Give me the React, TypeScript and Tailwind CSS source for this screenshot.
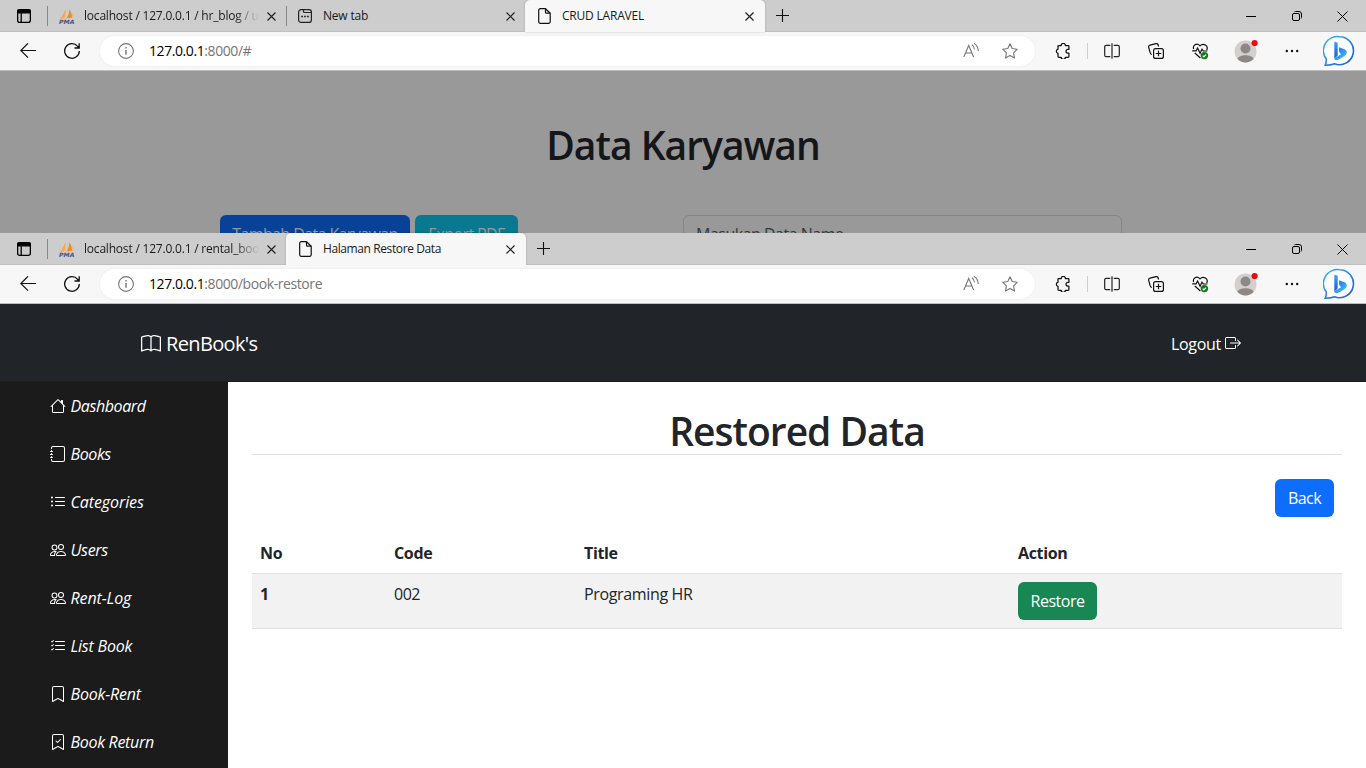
import React from "react";
import {
  BsBook,
  BsBookmark,
  BsBookmarkCheck,
  BsBoxArrowRight,
  BsHouse,
  BsJournal,
  BsListCheck,
  BsListUl,
  BsPeople,
} from "react-icons/bs";

const ui = "font-['Open_Sans','Noto_Sans',sans-serif]";

function Cross() {
  return (
    <svg className="h-[9px] w-[9px] shrink-0" viewBox="0 0 9 9" stroke="#222" strokeWidth="1.2">
      <path d="M.5.5l8 8M8.5.5l-8 8" />
    </svg>
  );
}

function WorkspaceIcon() {
  return (
    <svg className="h-[14px] w-[14px]" viewBox="0 0 14 14" fill="none" stroke="#000" strokeWidth="1.3">
      <rect x=".65" y=".65" width="12.7" height="12.7" rx="2.2" />
      <path d="M1 1.2h12v2.6H1z" fill="#000" />
      <path d="M4.2 4v9.3" />
    </svg>
  );
}

function PmaIcon() {
  return (
    <svg className="h-4 w-4 shrink-0" viewBox="0 0 16 16">
      <path d="M6.2.8C7 4 6.700 7.500 5.500 10.200L.8 10.700C3.200 8.400 5.400 4.800 6.200.8z" fill="#f6a94a" />
      <path d="M10.200 1.200c1.900 2.400 2.900 5.400 2.800 8.600l-5.600.5c1.900-2.500 2.900-5.600 2.800-9.100z" fill="#f08c1a" />
      <path d="M13 5c1.300 1.400 2 3 2.200 4.800l-1.700.2c.1-1.800 0-3.400-.5-5z" fill="#f6b765" />
      <text x="0" y="15.600" fontSize="5.800" fontWeight="bold" fontStyle="italic" fontFamily="DejaVu Sans" textLength="15.500" lengthAdjust="spacingAndGlyphs" fill="#4e5180">
        PMA
      </text>
    </svg>
  );
}

function PageIcon() {
  return (
    <svg className="h-4 w-[13px] shrink-0" viewBox="0 0 13 16" fill="none" stroke="#111" strokeWidth="1.2" strokeLinejoin="round">
      <path d="M2.200.7h5.300l4.700 4.500v8.600a1.500 1.500 0 0 1-1.500 1.500H2.200A1.500 1.500 0 0 1 .7 13.800V2.200A1.500 1.500 0 0 1 2.200.7z" />
      <path d="M7.500.7v3.500a1 1 0 0 0 1 1h3.700" />
    </svg>
  );
}

function NewTabIcon() {
  return (
    <svg className="h-[14px] w-[14px] shrink-0" viewBox="0 0 14 14" fill="none" stroke="#222" strokeWidth="1.2">
      <rect x=".6" y=".6" width="12.8" height="12.800" rx="2.500" />
      <path d="M5.500.8v1.700a1 1 0 0 0 1 1h6.700" />
      <path d="M3.200 7.500H5M6.100 7.500h1.800M9 7.500h1.800" strokeWidth="1.700" />
    </svg>
  );
}

function Tab({ icon, title, tracking = "tracking-[-0.2px]", fade = false, active = false }: {
  icon: React.ReactNode;
  title: string;
  tracking?: string;
  fade?: boolean;
  active?: boolean;
}) {
  return (
    <div
      className={
        active
          ? "flex h-8 w-60 shrink-0 items-center rounded-t-[5px] bg-[#f7f7f7] pl-[13px] pr-[11px] shadow-[0_0_2px_rgba(0,0,0,0.25)]"
          : "flex h-8 min-w-0 flex-1 items-center pl-[11px] pr-[10px]"
      }
    >
      <span className="flex w-[15px] shrink-0">{icon}</span>
      <span
        className={`min-w-0 flex-1 overflow-hidden whitespace-nowrap text-[12px] leading-4 text-[#1a1a1a] ${tracking} ${
          active ? "ml-[9px]" : "ml-[10px]"
        } ${fade ? "mr-2 [mask-image:linear-gradient(to_right,#000_86%,transparent)]" : ""}`}
      >
        {title}
      </span>
      <Cross />
    </div>
  );
}

function Divider() {
  return <span className="h-5 w-px shrink-0 bg-[#888]" />;
}

function WindowButtons() {
  return (
    <div className="ml-auto flex h-8 items-center">
      <span className="flex w-[46px] justify-center">
        <span className="h-px w-[10px] bg-black" />
      </span>
      <span className="flex w-[46px] justify-center">
        <svg className="h-[10px] w-[10px]" viewBox="0 0 10 10" fill="none" stroke="#000">
          <rect x=".5" y="2.500" width="7" height="7" rx="1.500" />
          <path d="M2.500.9C2.800.6 3.200.5 3.600.5H7A2.500 2.500 0 0 1 9.500 3v3.400c0 .4-.1.800-.4 1.100" />
        </svg>
      </span>
      <span className="flex w-[46px] justify-center pr-px">
        <svg className="h-[11px] w-[11px]" viewBox="0 0 11 11" stroke="#000">
          <path d="M.5.5l10 10M10.500.5l-10 10" />
        </svg>
      </span>
    </div>
  );
}

function TabStrip({ children }: { children: React.ReactNode }) {
  return (
    <div className="flex h-8 items-center bg-[#cdcdcd] shadow-[inset_0_-1px_0_#c0c0c0]">
      <span className="flex w-[47px] shrink-0 pl-[17px]">
        <WorkspaceIcon />
      </span>
      {children}
      <svg className="ml-[11px] h-[14px] w-[14px]" viewBox="0 0 14 14" stroke="#111" strokeWidth="1.100">
        <path d="M6.500 0v13M0 6.500h13" />
      </svg>
      <WindowButtons />
    </div>
  );
}

function BingIcon() {
  return (
    <svg className="h-8 w-8" viewBox="0 0 32 32">
      <defs>
        <linearGradient id="bubble" x1="0" y1="0" x2="1" y2="1">
          <stop offset="0" stopColor="#35b8f2" />
          <stop offset="1" stopColor="#2456c9" />
        </linearGradient>
        <linearGradient id="bee" x1="0" y1="0" x2="0" y2="1">
          <stop offset="0" stopColor="#37a9f5" />
          <stop offset="1" stopColor="#1d55d8" />
        </linearGradient>
        <linearGradient id="wing" x1="0" y1="0" x2="1" y2="1">
          <stop offset="0" stopColor="#1e62e0" />
          <stop offset="1" stopColor="#42d3ee" />
        </linearGradient>
      </defs>
      <path
        d="M16.500 1.700a14 14 0 1 1-5 27.100c-2.700 1.100-6 1.500-9.300 1.500.9-2 1.200-4.300 1.100-6.300A14 14 0 0 1 16.500 1.700z"
        fill="#fff"
        stroke="url(#bubble)"
        strokeWidth="1.600"
      />
      <path d="M11.300 6.500l3.400 1.300v12.700l-3.400 3.200z" fill="url(#bee)" />
      <path d="M16.100 12.300l6 2.300c1.700.8 2.300 3.300.9 5.100-1.900 1.700-5.600 4.100-8.300 5.300-1.600.5-3-.2-3.400-1.500l6.700-4.300-1.900-2.400z" fill="url(#wing)" />
    </svg>
  );
}

function Toolbar({ path }: { path: string }) {
  return (
    <div className="flex h-[39px] items-center border-b border-[#bdbdbd] bg-[#f7f7f7]">
      <span className="flex w-[50px] shrink-0 pl-5">
        <svg className="h-4 w-4" viewBox="0 0 16 16" fill="none" stroke="#111" strokeWidth="1.200">
          <path d="M16 7.500H.8M8 .3L.8 7.500 8 14.700" />
        </svg>
      </span>
      <span className="flex w-[50px] shrink-0 pl-[14px]">
        <svg className="h-4 w-4" viewBox="0 0 16 16" fill="none" stroke="#111" strokeWidth="1.300">
          <path d="M15.300 8A7.300 7.300 0 1 1 13.600 3.300L15.200 5M15.200.3V5h-4.700" />
        </svg>
      </span>
      <div className="flex h-[30px] w-[935px] items-center rounded-full bg-white pl-[18px] shadow-[0_0_3px_rgba(0,0,0,0.06)]">
        <svg className="h-4 w-4" viewBox="0 0 16 16" fill="none" stroke="#757575" strokeWidth="1.100">
          <circle cx="8" cy="8" r="7.400" />
          <path d="M8 7v4.700M8 4v1.500" strokeWidth="1.400" />
        </svg>
        <span className="ml-[15px] flex-1 whitespace-nowrap text-[14px] leading-5 tracking-[-0.42px] text-[#767676]">
          <span className="text-black">127.0.0.1</span>
          {path}
        </span>
        <svg className="mr-[23px] h-4 w-4" viewBox="0 0 16 16" fill="none" stroke="#757575" strokeWidth="1.100">
          <path d="M.8 14L5.700 2.500 10.600 14M2.500 10h6.400M8.900 1.800c1.600 1 2.500 2.600 2.600 4.700M11 .4c2.600 1.600 4.100 4.200 4.300 7.600" />
        </svg>
        <svg className="mr-[17px] h-4 w-4" viewBox="0 0 16 16" fill="none" stroke="#757575" strokeWidth="1.100" strokeLinejoin="round">
          <path d="M8 .8l2.200 4.700 5.100.7-3.700 3.600.9 5.300L8 12.600l-4.500 2.500.9-5.300L.7 6.200l5.100-.7z" />
        </svg>
      </div>
      <span className="flex w-[52px] pl-5">
        <svg className="h-4 w-4" viewBox="0 0 16 16" fill="none" stroke="#111" strokeWidth="1.250" strokeLinejoin="round">
          <path d="M3.700 2.500h2.500a2.100 2.100 0 0 1 4.200 0h2.700a.8.8 0 0 1 .8.800v3h-1a1.900 1.900 0 0 0 0 3.800h1v3.400a.8.8 0 0 1-.8.800h-2.700a2.100 2.100 0 0 1-4.200 0H3.800a.8.8 0 0 1-.8-.8v-3.200a2.100 2.100 0 0 1 0-4.100V3.200a.7.700 0 0 1 .7-.7z" />
        </svg>
      </span>
      <span className="h-4 w-px bg-[#cfcfcf]" />
      <svg className="ml-4 h-4 w-4" viewBox="0 0 16 16" fill="none" stroke="#222" strokeWidth="1.200">
        <path d="M6.300 2.300H2.200A1.500 1.500 0 0 0 .7 3.800v8.400a1.500 1.500 0 0 0 1.500 1.500h4.100M9.700 2.300h4.100a1.500 1.500 0 0 1 1.500 1.500v8.400a1.500 1.500 0 0 1-1.500 1.500H9.700M8 .3v15.400" />
      </svg>
      <svg className="ml-7 h-4 w-4" viewBox="0 0 16 16" fill="none" stroke="#111" strokeWidth="1.200">
        <rect x="5.600" y="5.600" width="9.800" height="9.800" rx="2" />
        <path d="M10.500 7.700v5.600M7.700 10.500h5.600M3.900 11.500c-1-.2-1.600-.9-1.800-1.900L.7 4.300c-.2-1 .4-1.900 1.300-2.100l6-1.600c1-.2 1.800.3 2.100 1.200l.5 1.700" />
      </svg>
      <svg className="ml-7 h-[17px] w-[17px]" viewBox="0 0 17 17" fill="none" stroke="#111" strokeWidth="1.200">
        <path d="M1.700 6.100C.3 2.500 4.600-.7 8 2.800c3.400-3.500 8.800.2 6.700 4.200M.2 7.900h3.900l1.500-2.900 2.500 5.300 1.900-4.200 1.300 1.900h4.100M2.800 10l5.600 5" />
        <circle cx="12.400" cy="12.600" r="3.700" fill="#0f7b16" stroke="none" />
        <path d="M10.700 12.700l1.200 1.200 2.100-2.300" stroke="#fff" />
      </svg>
      <svg className="mb-px ml-[25px] h-6 w-6" viewBox="0 0 24 24">
        <circle cx="11.500" cy="12.500" r="11" fill="#d2d0ce" />
        <circle cx="11.500" cy="9.500" r="5" fill="#8d8886" />
        <path d="M3.500 20c1-5 15-5 16 0a11 11 0 0 1-16 0z" fill="#8d8886" />
        <circle cx="20.600" cy="4" r="3.100" fill="#ea0d0d" />
      </svg>
      <svg className="ml-[27px] h-4 w-[14px]" viewBox="0 0 14 16" fill="#111">
        <circle cx="1.800" cy="8" r="1.200" />
        <circle cx="7" cy="8" r="1.200" />
        <circle cx="12.200" cy="8" r="1.200" />
      </svg>
      <span className="ml-6">
        <BingIcon />
      </span>
    </div>
  );
}

const menu = [
  { icon: BsHouse, label: "Dashboard", tracking: "tracking-[-0.4px]" },
  { icon: BsJournal, label: "Books", tracking: "tracking-[-0.4px]" },
  { icon: BsListUl, label: "Categories", tracking: "tracking-[-0.1px]" },
  { icon: BsPeople, label: "Users", tracking: "tracking-[-0.3px]" },
  { icon: BsPeople, label: "Rent-Log", tracking: "tracking-[-0.1px]" },
  { icon: BsListCheck, label: "List Book", tracking: "tracking-[-0.2px]" },
  { icon: BsBookmark, label: "Book-Rent", tracking: "tracking-[-0.2px]" },
  { icon: BsBookmarkCheck, label: "Book Return", tracking: "tracking-[-0.3px]" },
];

function EmployeeWindow() {
  return (
    <section className="h-[233px] shrink-0 overflow-hidden bg-[#999]">
      <TabStrip>
        <Divider />
        <div className="flex w-[238px]">
          <Tab icon={<PmaIcon />} title="localhost / 127.0.0.1 / hr_blog / u" fade />
        </div>
        <Divider />
        <div className="flex w-[238px]">
          <Tab icon={<NewTabIcon />} title="New tab" />
        </div>
        <Tab icon={<PageIcon />} title="CRUD LARAVEL" active />
      </TabStrip>
      <Toolbar path=":8000/#" />
      <h1 className="mt-[50px] text-center text-[39px] font-semibold leading-[48px] tracking-[-1px] text-[#14161a]">
        Data Karyawan
      </h1>
      <div className="ml-[220px] mt-[46px] flex items-start text-[16px] leading-6 tracking-[-0.6px]">
        <span className="flex h-[38px] w-[190px] items-center justify-center whitespace-nowrap rounded-md bg-[#084298] text-[#999]">
          Tambah Data Karyawan
        </span>
        <span className="ml-[5px] flex h-[38px] w-[103px] items-center justify-center whitespace-nowrap rounded-md bg-[#087990] text-[#999]">
          Export PDF
        </span>
        <span className="ml-[165px] flex h-[38px] w-[439px] items-center rounded-md border border-[#858687] pl-3 tracking-[-0.5px] text-[#34383c]">
          Masukan Data Name
        </span>
      </div>
    </section>
  );
}

function Header() {
  return (
    <header className="flex h-[78px] shrink-0 items-center justify-between border-b border-[#1b1d20] bg-[#212529] pl-[141px] pr-[125px] pt-[2px] text-white">
      <span className="flex items-center gap-[5px] text-[20px] leading-[30px] tracking-[-0.65px]">
        <BsBook className="h-5 w-5" />
        RenBook's
      </span>
      <span className="flex items-center gap-1 text-[16px] leading-6 tracking-[-0.3px]">
        Logout
        <BsBoxArrowRight className="mb-px h-4 w-4" />
      </span>
    </header>
  );
}

function RestoreTable() {
  return (
    <table className="mt-4 w-[1090px] table-fixed border-collapse text-left text-[16px] leading-6 tracking-[-0.35px] text-[#212529]">
      <colgroup>
        <col className="w-[134px]" />
        <col className="w-[190px]" />
        <col className="w-[434px]" />
        <col />
      </colgroup>
      <thead>
        <tr className="h-[40px] border-b border-[#dee2e6] font-bold">
          <th className="px-2">No</th>
          <th className="px-2">Code</th>
          <th className="px-2">Title</th>
          <th className="px-2">Action</th>
        </tr>
      </thead>
      <tbody>
        <tr className="h-[55px] border-b border-[#dee2e6] bg-[#f2f2f2] align-top">
          <th className="px-2 pt-2">1</th>
          <td className="px-2 pt-2 tracking-[-0.5px]">002</td>
          <td className="px-2 pt-2">Programing HR</td>
          <td className="px-2 pt-2">
            <button className="flex h-[38px] w-[79px] items-center justify-center rounded-md bg-[#198754] tracking-[-0.5px] text-white">
              Restore
            </button>
          </td>
        </tr>
      </tbody>
    </table>
  );
}

function LibraryWindow() {
  return (
    <section className="flex h-[535px] flex-col bg-white">
      <TabStrip>
        <Divider />
        <div className="flex w-[238px]">
          <Tab icon={<PmaIcon />} title="localhost / 127.0.0.1 / rental_boo" fade />
        </div>
        <Tab icon={<PageIcon />} title="Halaman Restore Data" tracking="tracking-[-0.4px]" active />
      </TabStrip>
      <Toolbar path=":8000/book-restore" />
      <Header />
      <div className="flex min-h-0 flex-1">
        <nav className="w-[228px] shrink-0 overflow-hidden bg-[#1b1b1b] text-[16px] italic leading-6 text-white">
          {menu.map(({ icon: Icon, label, tracking }) => (
            <a key={label} className={`flex h-12 items-center gap-[4.5px] pl-[50px] ${tracking}`}>
              <Icon className="h-4 w-4" />
              {label}
            </a>
          ))}
        </nav>
        <main className="flex-1 px-6 pt-[26px]">
          <h1 className="border-b border-[#dee2e6] text-center text-[39px] font-semibold leading-[46px] tracking-[-1px] text-[#212529]">
            Restored Data
          </h1>
          <div className="mt-6 flex justify-end pr-2">
            <button className="h-[38px] w-[59px] rounded-md bg-[#0d6efd] text-[16px] leading-6 tracking-[-0.6px] text-white">
              Back
            </button>
          </div>
          <RestoreTable />
        </main>
      </div>
    </section>
  );
}

export default function App() {
  return (
    <div className={`h-[768px] w-[1366px] overflow-hidden ${ui}`}>
      <EmployeeWindow />
      <LibraryWindow />
    </div>
  );
}
